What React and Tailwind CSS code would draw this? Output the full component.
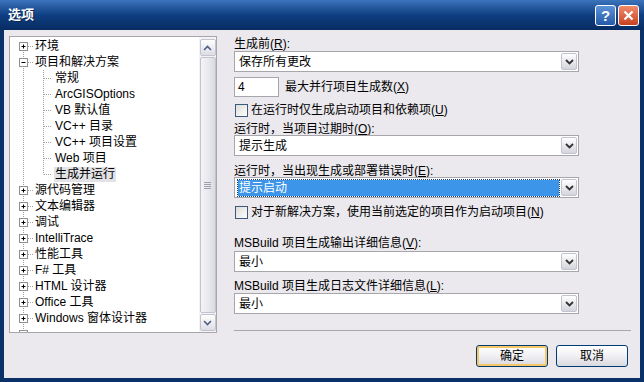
import React from 'react';

const FONT = { fontFamily: "'Liberation Sans', 'Noto Sans CJK SC', sans-serif" };

const treeItems = [
  { label: '环境', kind: 'plus', first: true },
  { label: '项目和解决方案', kind: 'minus' },
  { label: '常规', child: true },
  { label: 'ArcGISOptions', child: true },
  { label: 'VB 默认值', child: true },
  { label: 'VC++ 目录', child: true },
  { label: 'VC++ 项目设置', child: true },
  { label: 'Web 项目', child: true },
  { label: '生成并运行', child: true, last: true, selected: true },
  { label: '源代码管理', kind: 'plus' },
  { label: '文本编辑器', kind: 'plus' },
  { label: '调试', kind: 'plus' },
  { label: 'IntelliTrace', kind: 'plus' },
  { label: '性能工具', kind: 'plus' },
  { label: 'F# 工具', kind: 'plus' },
  { label: 'HTML 设计器', kind: 'plus' },
  { label: 'Office 工具', kind: 'plus' },
  { label: 'Windows 窗体设计器', kind: 'plus' },
  { label: '', kind: 'plus' },
];

function Gutter({ item }) {
  const w = item.child ? 44 : 24;
  return (
    <svg width={w} height="16" className="shrink-0">
      <line x1="13.5" y1={item.first ? 8 : 0} x2="13.5" y2="16" stroke="#a0a0a0" strokeDasharray="1 1" />
      {item.child ? (
        <>
          <line x1="33.5" y1="0" x2="33.5" y2={item.last ? 8.5 : 16} stroke="#a0a0a0" strokeDasharray="1 1" />
          <line x1="34" y1="8.5" x2="42" y2="8.5" stroke="#a0a0a0" strokeDasharray="1 1" />
        </>
      ) : (
        <>
          <line x1="18" y1="8.5" x2="23" y2="8.5" stroke="#a0a0a0" strokeDasharray="1 1" />
          <rect x="9.5" y="4.5" width="8" height="8" fill="#fff" stroke="#919191" />
          <line x1="11.5" y1="8.5" x2="15.5" y2="8.5" stroke="#000" />
          {item.kind === 'plus' && <line x1="13.5" y1="6.5" x2="13.5" y2="10.5" stroke="#000" />}
        </>
      )}
    </svg>
  );
}

function ScrollArrow({ up }) {
  return (
    <div className="w-[16px] h-[17px] rounded-[2px] border border-[#c3c3cf] bg-gradient-to-b from-[#ffffff] to-[#dcdce4] flex items-center justify-center">
      <svg width="9" height="6" viewBox="0 0 9 6">
        <path d={up ? 'M1 5 L4.5 1.5 L8 5' : 'M1 1 L4.5 4.5 L8 1'} fill="none" stroke="#4d6185" strokeWidth="1.6" />
      </svg>
    </div>
  );
}

function Tree() {
  return (
    <div className="w-[208px] h-[297px] border border-[#a7a6aa] bg-white flex overflow-hidden">
      <div className="flex-1 pt-[1px] overflow-hidden">
        {treeItems.map((it, i) => (
          <div key={i} className="h-[16px] flex items-center">
            <Gutter item={it} />
            <span
              className={`text-[12px] leading-[15px] px-[1px] whitespace-nowrap text-black ${it.selected ? 'bg-[#e3e2e6]' : ''}`}
            >
              {it.label}
            </span>
          </div>
        ))}
      </div>
      <div className="w-[17px] flex flex-col items-center bg-[#f3f3f5] pt-[2px] pb-[1px]">
        <ScrollArrow up />
        <div className="w-[16px] flex-1 my-[1px] rounded-[2px] border border-[#c3c3cf] bg-gradient-to-r from-[#f4f4f7] via-[#e9e9ee] to-[#d9d9e0] flex items-center justify-center">
          <div className="flex flex-col gap-[1px]">
            <div className="w-[7px] h-[1px] bg-[#a0a0b0]" />
            <div className="w-[7px] h-[1px] bg-[#a0a0b0]" />
            <div className="w-[7px] h-[1px] bg-[#a0a0b0]" />
            <div className="w-[7px] h-[1px] bg-[#a0a0b0]" />
          </div>
        </div>
        <ScrollArrow />
      </div>
    </div>
  );
}

function Combo({ value, selected }) {
  return (
    <div className="w-[345px] h-[21px] border border-[#a7a6aa] bg-white flex items-center p-[1px]">
      <div className="flex-1 h-full flex items-center px-[2px]">
        <span
          className={`h-[16px] flex items-center flex-1 text-[12px] px-[1px] ${selected ? 'bg-[#3d95ea] text-white outline outline-1 outline-dotted outline-[#1a3d6b]' : 'text-black'}`}
        >
          {value}
        </span>
      </div>
      <div className="w-[16px] h-[17px] rounded-[2px] border border-[#c3c3cf] bg-gradient-to-b from-[#ffffff] to-[#d4d4dc] flex items-center justify-center">
        <svg width="9" height="6" viewBox="0 0 9 6">
          <path d="M1 1 L4.5 4.5 L8 1" fill="none" stroke="#333" strokeWidth="1.8" />
        </svg>
      </div>
    </div>
  );
}

function Label({ children, hot, className = '' }) {
  return (
    <div className={`h-[13px] flex items-center text-[12px] text-black whitespace-nowrap ${className}`}>
      {children}(<span className="underline">{hot}</span>):
    </div>
  );
}

function Check({ children, hot, className = '' }) {
  return (
    <div className={`h-[14px] flex items-center gap-[3px] text-[12px] text-black whitespace-nowrap ${className}`}>
      <div className="ml-[1px] w-[13px] h-[13px] border border-[#3c5a80] bg-gradient-to-br from-[#dcdcd7] to-[#ffffff]" />
      <span>
        {children}(<span className="underline">{hot}</span>)
      </span>
    </div>
  );
}

function Button({ children, isDefault }) {
  return (
    <button
      className={`w-[72px] h-[22px] rounded-[3px] border border-[#003c74] bg-gradient-to-b from-[#ffffff] via-[#f0f0f3] to-[#d8d8e0] text-[12px] text-black flex items-center justify-center ${isDefault ? 'shadow-[inset_0_0_0_2px_#f7c766]' : ''}`}
    >
      {children}
    </button>
  );
}

export default function App() {
  return (
    <div style={FONT} className="w-[644px] h-[382px] bg-[#0a3168] flex flex-col overflow-hidden">
      <div className="h-[30px] shrink-0 bg-gradient-to-b from-[#3c74bc] via-[#0e3f82] to-[#082c62] flex items-center pl-[8px] pr-[5px]">
        <span className="text-white font-bold text-[13px] flex-1 [text-shadow:1px_1px_0_#0a2550]">选项</span>
        <div className="flex gap-[2px]">
          <div className="w-[21px] h-[21px] rounded-[3px] border border-white bg-gradient-to-b from-[#5c93d8] to-[#2459a8] flex items-center justify-center text-white font-bold text-[15px] leading-none">
            ?
          </div>
          <div className="w-[21px] h-[21px] rounded-[3px] border border-white bg-gradient-to-b from-[#f08a6a] to-[#c8401e] flex items-center justify-center">
            <svg width="11" height="11" viewBox="0 0 11 11">
              <path d="M1.5 1.5 L9.5 9.5 M9.5 1.5 L1.5 9.5" stroke="#fff" strokeWidth="2.2" />
            </svg>
          </div>
        </div>
      </div>
      <div className="flex-1 mx-[4px] mb-[4px] bg-[#ebe9ed] flex flex-col">
        <div className="flex pl-[5px] pt-[6px]">
          <Tree />
          <div className="ml-[17px] w-[397px] flex flex-col pt-[1px]">
            <Label hot="R">生成前</Label>
            <div className="h-[1px]" />
            <Combo value="保存所有更改" />
            <div className="mt-[5px] flex items-center gap-[6px]">
              <div className="w-[45px] h-[20px] border border-[#a7a6aa] bg-white text-[12px] flex items-center pl-[3px]">4</div>
              <span className="text-[12px]">
                最大并行项目生成数(<span className="underline">X</span>)
              </span>
            </div>
            <Check hot="U" className="mt-[6px]">在运行时仅生成启动项目和依赖项</Check>
            <Label hot="O" className="mt-[5px]">运行时，当项目过期时</Label>
            <Combo value="提示生成" />
            <Label hot="E" className="mt-[8px]">运行时，当出现生成或部署错误时</Label>
            <Combo value="提示启动" selected />
            <Check hot="N" className="mt-[7px]">对于新解决方案，使用当前选定的项目作为启动项目</Check>
            <Label hot="V" className="mt-[17px]">MSBuild 项目生成输出详细信息</Label>
            <div className="h-[2px]" />
            <Combo value="最小" />
            <Label hot="L" className="mt-[7px]">MSBuild 项目生成日志文件详细信息</Label>
            <div className="h-[1px]" />
            <Combo value="最小" />
            <div className="mt-auto h-[2px] border-t border-[#a7a6aa] border-b-white mb-[1px]" />
          </div>
        </div>
        <div className="flex justify-end gap-[8px] pr-[12px] mt-[12px]">
          <Button isDefault>确定</Button>
          <Button>取消</Button>
        </div>
      </div>
    </div>
  );
}
